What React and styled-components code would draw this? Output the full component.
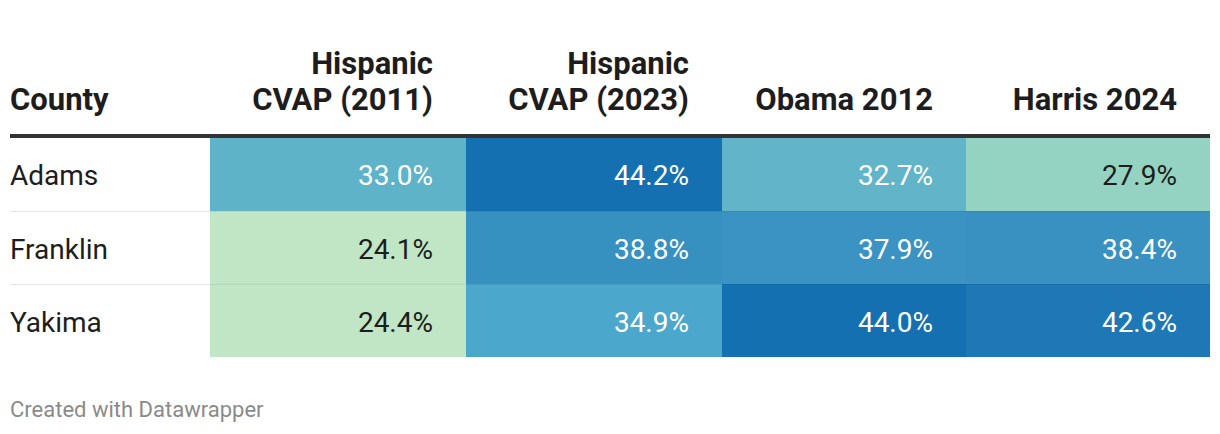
import React from "react";
import styled, { createGlobalStyle } from "styled-components";

const GlobalStyle = createGlobalStyle`
  body {
    margin: 0;
    background: #ffffff;
    font-family: Roboto, "Liberation Sans", sans-serif;
  }
`;

const Container = styled.div`
  width: 1220px;
  height: 434px;
  padding: 46px 10px 0 10px;
  box-sizing: border-box;
  display: flex;
  flex-direction: column;
`;

const Table = styled.div`
  display: grid;
  grid-template-columns: 200px 256px 256px 244px 244px;
`;

const HeaderCell = styled.div`
  display: flex;
  align-items: flex-end;
  justify-content: ${(p) => (p.$left ? "flex-start" : "flex-end")};
  text-align: ${(p) => (p.$left ? "left" : "right")};
  padding: 0 ${(p) => (p.$left ? "0" : "33px")} 16px 0;
  font-weight: 700;
  font-size: 31px;
  line-height: 36px;
  color: #1d1d1d;
  border-bottom: 4px solid #333333;
`;

const Cell = styled.div`
  height: 73px;
  box-sizing: border-box;
  display: flex;
  align-items: center;
  justify-content: ${(p) => (p.$left ? "flex-start" : "flex-end")};
  padding-right: ${(p) => (p.$left ? "0" : "33px")};
  padding-top: 2px;
  font-size: 28px;
  color: ${(p) => (p.$light ? "#ffffff" : "#1d1d1d")};
  background: ${(p) => p.$bg || "transparent"};
  border-top: ${(p) =>
    p.$first ? "none" : p.$bg ? "1px solid rgba(0,0,0,0.06)" : "1px solid #e6e6e6"};
`;

const Footer = styled.div`
  margin-top: 40px;
  font-size: 22px;
  line-height: 26px;
  color: #8a8a8a;
`;

const headers = ["County", "Hispanic\nCVAP (2011)", "Hispanic\nCVAP (2023)", "Obama 2012", "Harris 2024"];

const rows = [
  {
    county: "Adams",
    cells: [
      ["33.0%", "#5fb3c8", true],
      ["44.2%", "#1470b0", true],
      ["32.7%", "#62b5c8", true],
      ["27.9%", "#94d3c1", false],
    ],
  },
  {
    county: "Franklin",
    cells: [
      ["24.1%", "#c0e6c5", false],
      ["38.8%", "#3690c0", true],
      ["37.9%", "#3a93c3", true],
      ["38.4%", "#3891c1", true],
    ],
  },
  {
    county: "Yakima",
    cells: [
      ["24.4%", "#c0e6c5", false],
      ["34.9%", "#4ba7cb", true],
      ["44.0%", "#1470b0", true],
      ["42.6%", "#1d78b5", true],
    ],
  },
];

const App = () => {
  return (
    <>
      <GlobalStyle />
      <Container>
        <Table>
          {headers.map((h, i) => (
            <HeaderCell key={h} $left={i === 0}>
              <span>
                {h.split("\n").map((line, j) => (
                  <React.Fragment key={j}>
                    {j > 0 && <br />}
                    {line}
                  </React.Fragment>
                ))}
              </span>
            </HeaderCell>
          ))}
          {rows.map((row, r) => (
            <React.Fragment key={row.county}>
              <Cell $left $first={r === 0}>
                {row.county}
              </Cell>
              {row.cells.map(([value, bg, light]) => (
                <Cell key={value} $bg={bg} $light={light} $first={r === 0}>
                  {value}
                </Cell>
              ))}
            </React.Fragment>
          ))}
        </Table>
        <Footer>Created with Datawrapper</Footer>
      </Container>
    </>
  );
};

export default App;
